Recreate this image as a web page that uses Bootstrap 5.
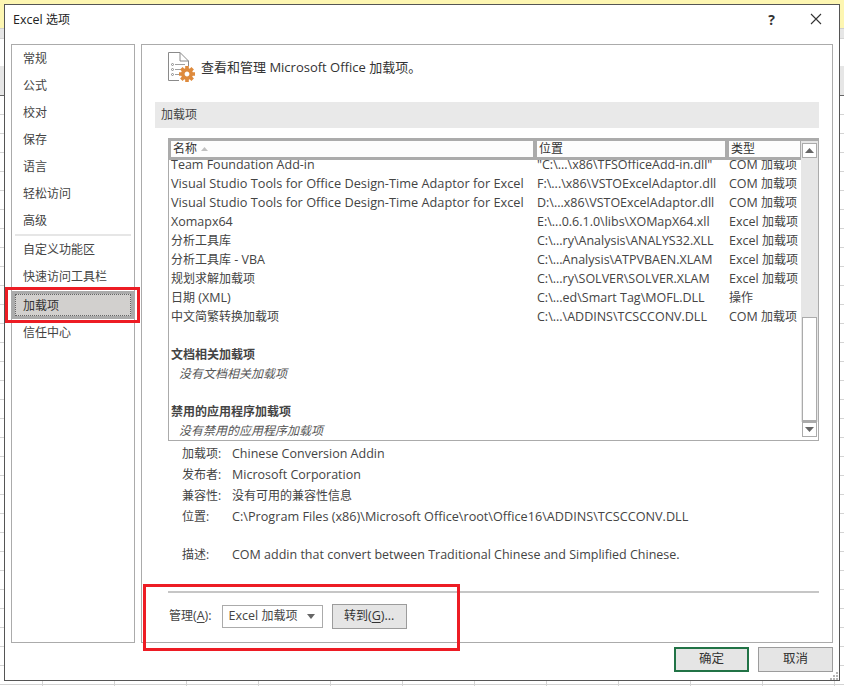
<!DOCTYPE html>
<html lang="zh"><head><meta charset="utf-8"><title>Excel 选项</title>
<link href="https://cdn.jsdelivr.net/npm/bootstrap@5.3.0/dist/css/bootstrap.min.css" rel="stylesheet">
<style>
html,body{height:686px;overflow:hidden}
body{font-family:"Open Sans","Noto Sans CJK SC",sans-serif;font-size:12.5px;color:#444;background-color:#fff;
 background-image:linear-gradient(#fdf6b2 0 28px,#cfcfcf 28px 29px,#e6e6e6 29px 38px,#d4d4d4 38px 39px,#fff 39px 66px,#e6e6e6 66px 95px,#666 95px 96px),
 linear-gradient(90deg,#d4d4d4 0 1px,transparent 1px),
 linear-gradient(transparent 0 18px,#d4d4d4 18px 19px);
 background-size:100% 96px,72px 100%,100% 19px;background-position:0 0,42px 0,0 96px;background-repeat:no-repeat,repeat-x,repeat-y;padding:4px 4px 5px 4px}
.z{font-size:12px}
.dlg{width:836px;height:677px;background:#fff;border:1px solid #555;display:flex;flex-direction:column}
.ttl{height:39px;padding:0 0 11px 8px;color:#222;font-size:12.5px}
.ttltx{padding-top:2px}
.ttlctl{gap:35px;padding-right:17px}
.qm{font-size:14px;color:#333}
.mainr{height:599px;padding:0 6px;gap:6px}
.leftp{width:124px;border:1px solid #ababab}
.nv{height:27px;padding-left:11px;line-height:27px;font-size:12px;color:#444}
.nvsep{height:2px;background:#e6e6e6;margin:0 3px}
.nvon{height:28px;margin:1px 0 0 0;background:#d2d0ce;border:3px solid #ababab;outline:1px dotted #666;outline-offset:-4px;line-height:24px;padding-left:8px;color:#333;font-size:12px}
.rightp{flex:1 1 0;border:1px solid #ababab;padding:0 13px;min-width:0}
.headr{height:57px;padding:0 0 13px 13px;gap:3px;font-size:13px;color:#333}
.headtx{padding-top:2px}
.sect{height:26px;background:#e9e9e9;padding-left:6px;line-height:26px;margin-bottom:10px;color:#444;font-size:12px}
.lbx{height:303px;margin-left:13px;border:1px solid #ababab;display:flex}
.lbody{flex:1 1 0;min-width:0;overflow:hidden}
.hdrw{height:21px;border-top:2px solid #ababab;border-bottom:3px solid #ababab;background:#ababab;display:grid;grid-template-columns:362px 188px 71px;gap:4px;padding:0 1px 0 2px;position:relative;z-index:1}
.hdrw>div{background:#fdfdfd;padding-left:2px;line-height:16px;color:#333;font-size:12px}
.srt{vertical-align:2px;margin-left:1px}
.rws{margin-top:-5px;padding-left:2px}
.rw{height:19px;display:grid;grid-template-columns:362px 188px 71px;gap:4px;line-height:19px;white-space:nowrap}
.wd{font-size:12.75px}
.pth{font-size:12.67px}
.gh{height:19px;line-height:19px;font-weight:700;color:#444;font-size:12px}
.gap19{margin-top:19px}
.gi{height:19px;line-height:19px;font-style:italic;padding-left:8px;color:#555;font-size:12px}
.sbar{width:17px;flex:none;display:flex;flex-direction:column;padding-top:0}
.strack{background:#e6e6e6;flex:1 1 0;display:flex;flex-direction:column;padding:2px 1px 0 1px;border-top:0}
.sarrow{height:15px;border:1px solid #ababab;background:#fff;display:flex;align-items:center;justify-content:center;flex:none}
.sthumb{height:105px;border:1px solid #ababab;border-bottom-width:2px;background:#fff;margin-top:auto}
.sdown{margin:0 1px 3px 1px}
.stop{border-top:2px solid #ababab}
.info{margin:2px 0 0 27px}
.irow{height:21px;line-height:21px;display:flex}
.ilab{width:50px;color:#444;font-size:12px}
.gap17{margin-top:17px}
.ftsep{height:2px;background:#c6c6c6;margin:26px 0 0 13px}
.mgr{margin:11px 0 0 14px;gap:9px}
.mgrlb{margin-right:1px}
.drop{width:101px;height:23px;border:1px solid #ababab;padding:0 7px 0 6px;color:#444}
.caret{width:0;height:0;border:4px solid transparent;border-top:5px solid #666;border-bottom:0}
.wbtn{background:#e5e5e5;border:1px solid #9c9c9c;border-radius:0;padding:0;font-size:12.5px;color:#333;line-height:1;height:25px;width:75px;--bs-btn-hover-bg:#e5e5e5}
.okb{border:2px solid #217346}
.ftr{height:37px;padding:4px 6px 0 0;gap:9px}
.mk{position:absolute;border:3px solid #ed1c24;pointer-events:none}
.mk1{left:5px;top:287px;width:135px;height:36px}
.mk2{left:143px;top:584px;width:317px;height:67px}
.grip{position:absolute;left:830px;top:672px}
u{text-underline-offset:2px}
</style></head><body>
<div class="dlg">
 <div class="ttl d-flex align-items-center justify-content-between">
  <span class="ttltx">Excel <span class="z">选项</span></span>
  <div class="d-flex align-items-center ttlctl">
   <span class="fw-bold qm">?</span>
   <svg width="12" height="12" viewBox="0 0 12 12"><path d="M1 1 11 11M11 1 1 11" stroke="#333" stroke-width="1.1" fill="none"/></svg>
  </div>
 </div>
 <div class="mainr d-flex">
  <div class="leftp">
   <div class="nv">常规</div><div class="nv">公式</div><div class="nv">校对</div><div class="nv">保存</div><div class="nv">语言</div><div class="nv">轻松访问</div><div class="nv">高级</div>
   <div class="nvsep"></div>
   <div class="nv">自定义功能区</div><div class="nv">快速访问工具栏</div>
   <div class="nvon">加载项</div>
   <div class="nv">信任中心</div>
  </div>
  <div class="rightp d-flex flex-column">
   <div class="headr d-flex align-items-center">
    <svg width="30" height="32" viewBox="0 0 30 32"><path d="M11 29.5H.5V1.5H12L20.5 10V15" fill="none" stroke="#8a8a8a"/><path d="M12 1.5V10H20.5" fill="none" stroke="#8a8a8a"/><path d="M7 13.5H17M7 18.5H14M7 23.5H12" stroke="#a0a0a0"/><g fill="none" stroke="#8a8a8a"><circle cx="4.5" cy="13.5" r="1"/><circle cx="4.5" cy="18.5" r="1"/><circle cx="4.5" cy="23.5" r="1"/></g><g transform="translate(19 23)"><circle r="4.2" fill="none" stroke="#de8a3c" stroke-width="3.6"/><g fill="#de8a3c"><path d="M-1.8-8H1.8V-5H-1.8ZM-1.8 5H1.8V8H-1.8ZM-8-1.8H-5V1.8H-8ZM5-1.8H8V1.8H5Z"/><path d="M-1.8-8H1.8V-5H-1.8ZM-1.8 5H1.8V8H-1.8ZM-8-1.8H-5V1.8H-8ZM5-1.8H8V1.8H5Z" transform="rotate(45)"/></g></g></svg>
    <span class="headtx">查看和管理 Microsoft Office 加载项。</span>
   </div>
   <div class="sect">加载项</div>
   <div class="lbx">
    <div class="lbody">
     <div class="hdrw"><div>名称 <svg class="srt" width="7" height="4" viewBox="0 0 7 4"><path d="M0 4 3.5 0 7 4Z" fill="#c0c0c0"/></svg></div><div>位置</div><div>类型</div></div>
     <div class="rws">
      <div class="rw"><div>Team Foundation Add-in</div><div>"C:\...\x86\TFSOfficeAdd-in.dll"</div><div>COM <span class="z">加载项</span></div></div>
      <div class="rw"><div class="wd">Visual Studio Tools for Office Design-Time Adaptor for Excel</div><div>F:\...\x86\VSTOExcelAdaptor.dll</div><div>COM <span class="z">加载项</span></div></div>
      <div class="rw"><div class="wd">Visual Studio Tools for Office Design-Time Adaptor for Excel</div><div>D:\...x86\VSTOExcelAdaptor.dll</div><div>COM <span class="z">加载项</span></div></div>
      <div class="rw"><div>Xomapx64</div><div>E:\...0.6.1.0\libs\XOMapX64.xll</div><div>Excel <span class="z">加载项</span></div></div>
      <div class="rw"><div class="z">分析工具库</div><div>C:\...ry\Analysis\ANALYS32.XLL</div><div>Excel <span class="z">加载项</span></div></div>
      <div class="rw"><div><span class="z">分析工具库</span> - VBA</div><div>C:\...Analysis\ATPVBAEN.XLAM</div><div>Excel <span class="z">加载项</span></div></div>
      <div class="rw"><div class="z">规划求解加载项</div><div>C:\...ry\SOLVER\SOLVER.XLAM</div><div>Excel <span class="z">加载项</span></div></div>
      <div class="rw"><div><span class="z">日期</span> (XML)</div><div>C:\...ed\Smart Tag\MOFL.DLL</div><div class="z">操作</div></div>
      <div class="rw"><div class="z">中文简繁转换加载项</div><div>C:\...\ADDINS\TCSCCONV.DLL</div><div>COM <span class="z">加载项</span></div></div>
      <div class="gh gap19">文档相关加载项</div>
      <div class="gi">没有文档相关加载项</div>
      <div class="gh gap19">禁用的应用程序加载项</div>
      <div class="gi">没有禁用的应用程序加载项</div>
     </div>
    </div>
    <div class="sbar">
     <div class="strack stop">
      <div class="sarrow"><svg width="9" height="5" viewBox="0 0 9 5"><path d="M0 5 4.5 0 9 5Z" fill="#666"/></svg></div>
      <div class="sthumb"></div>
     </div>
     <div class="sarrow sdown"><svg width="9" height="5" viewBox="0 0 9 5"><path d="M0 0 4.5 5 9 0Z" fill="#666"/></svg></div>
    </div>
   </div>
   <div class="info">
    <div class="irow"><div class="ilab">加载项:</div><div>Chinese Conversion Addin</div></div>
    <div class="irow"><div class="ilab">发布者:</div><div>Microsoft Corporation</div></div>
    <div class="irow"><div class="ilab">兼容性:</div><div class="z">没有可用的兼容性信息</div></div>
    <div class="irow"><div class="ilab">位置:</div><div class="pth">C:\Program Files (x86)\Microsoft Office\root\Office16\ADDINS\TCSCCONV.DLL</div></div>
    <div class="irow gap17"><div class="ilab">描述:</div><div>COM addin that convert between Traditional Chinese and Simplified Chinese.</div></div>
   </div>
   <div class="ftsep"></div>
   <div class="mgr d-flex align-items-center">
    <span class="mgrlb"><span class="z">管理</span>(<u>A</u>):</span>
    <div class="drop d-flex align-items-center justify-content-between"><span>Excel <span class="z">加载项</span></span><span class="caret"></span></div>
    <button class="btn wbtn"><span class="z">转到</span>(<u>G</u>)...</button>
   </div>
  </div>
 </div>
 <div class="ftr d-flex justify-content-end">
  <button class="btn wbtn okb z">确定</button>
  <button class="btn wbtn z">取消</button>
 </div>
</div>
<div class="mk mk1"></div><div class="mk mk2"></div>
<svg class="grip" width="8" height="8" viewBox="0 0 8 8" fill="#b5b5b5"><rect x="6" y="0" width="2" height="2"/><rect x="3" y="3" width="2" height="2"/><rect x="6" y="3" width="2" height="2"/><rect x="0" y="6" width="2" height="2"/><rect x="3" y="6" width="2" height="2"/><rect x="6" y="6" width="2" height="2"/></svg>
<script src="https://cdn.jsdelivr.net/npm/bootstrap@5.3.0/dist/js/bootstrap.bundle.min.js"></script>
</body></html>
